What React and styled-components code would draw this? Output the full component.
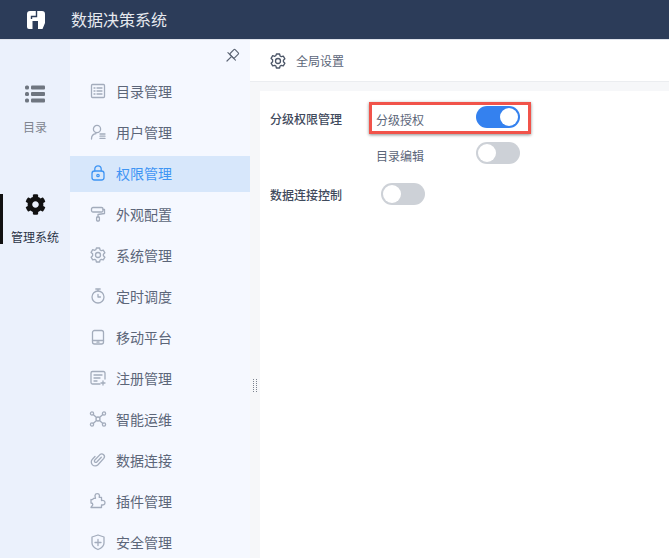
import React from "react";
import styled, { createGlobalStyle } from "styled-components";
import { FaCog } from "react-icons/fa";

const GlobalStyle = createGlobalStyle`
  html, body {
    margin: 0;
    padding: 0;
    height: 558px;
    overflow: hidden;
    background: #f6f7f9;
    font-family: "Noto Sans CJK SC", "Noto Sans", sans-serif;
  }
`;

const Page = styled.div`
  width: 669px;
  height: 558px;
  display: flex;
  flex-direction: column;
  overflow: hidden;
`;

const Header = styled.header`
  height: 39px;
  flex: none;
  background: #2c3c59;
  display: flex;
  align-items: center;
`;

const LogoBox = styled.div`
  width: 71px;
  display: flex;
  justify-content: center;
`;

const Title = styled.div`
  color: #e6e9ef;
  font-size: 16px;
  padding-bottom: 2px;
`;

const Body = styled.div`
  flex: 1;
  display: flex;
  min-height: 0;
  border-top: 1px solid #dfe3ec;
`;

const Rail = styled.nav`
  width: 70px;
  flex: none;
  background: #ebf1fc;
  padding-top: 44px;
  display: flex;
  flex-direction: column;
  gap: 59px;
  box-sizing: border-box;
`;

const RailItem = styled.div`
  display: flex;
  flex-direction: column;
  align-items: center;
  gap: 14px;
  font-size: 12px;
  line-height: 17px;
  position: relative;
  color: ${(p) => (p.$active ? "#2c3447" : "#80858f")};
  &::before {
    content: "";
    display: ${(p) => (p.$active ? "block" : "none")};
    position: absolute;
    left: 0;
    top: 0;
    width: 3px;
    height: 50px;
    background: #111;
  }
`;

const RailIcon = styled.div`
  height: 20px;
  display: flex;
  align-items: center;
  justify-content: center;
`;

const Menu = styled.aside`
  width: 180px;
  flex: none;
  background: #f5f8ff;
  padding-top: 34px;
  position: relative;
  box-sizing: border-box;
`;

const PinButton = styled.div`
  position: absolute;
  top: 5px;
  right: 10px;
  width: 16px;
  height: 16px;
  color: #5d6675;
`;

const MenuItem = styled.div`
  height: 36px;
  box-sizing: border-box;
  padding: 0 0 2px 19px;
  margin-bottom: 5px;
  display: flex;
  align-items: center;
  gap: 9px;
  font-size: 14px;
  color: ${(p) => (p.$active ? "#3f95f4" : "#5c6679")};
  background: ${(p) => (p.$active ? "#d7e7fb" : "transparent")};
  svg {
    color: ${(p) => (p.$active ? "#3f95f4" : "#a3acbc")};
    flex: none;
  }
`;

const Main = styled.main`
  flex: 1;
  display: flex;
  flex-direction: column;
  min-width: 0;
  position: relative;
`;

const GripMark = styled.svg`
  position: absolute;
  left: 3px;
  top: 339px;
`;

const TabBar = styled.div`
  height: 41px;
  flex: none;
  background: #fff;
  border-bottom: 1px solid #ebedf0;
  display: flex;
  align-items: center;
  padding-left: 19px;
  gap: 9px;
  font-size: 12px;
  color: #5c6679;
  svg {
    color: #4b5567;
  }
`;

const Panel = styled.section`
  flex: 1;
  margin: 9px 0 0 10px;
  background: #fff;
  padding: 15px 0 0 10px;
`;

const Group = styled.div`
  display: flex;
  align-items: flex-start;
  margin-bottom: 19px;
`;

const GroupLabel = styled.div`
  width: ${(p) => p.$width}px;
  flex: none;
  font-size: 12px;
  line-height: 22px;
  padding-top: ${(p) => p.$dip}px;
  font-weight: 500;
  color: #3f4a5c;
`;

const Options = styled.div`
  display: flex;
  flex-direction: column;
  gap: 14px;
`;

const Option = styled.div`
  width: 144px;
  height: 22px;
  display: flex;
  align-items: flex-start;
  justify-content: space-between;
  font-size: 12px;
  line-height: 22px;
  color: #5c6679;
  position: relative;
`;

const OptionText = styled.span`
  padding-top: 3px;
`;

const Highlight = styled.div`
  position: absolute;
  left: -7px;
  top: -4px;
  width: 162px;
  height: 32px;
  box-sizing: border-box;
  border: 3px solid #f1534a;
  box-shadow: 0 1px 3px rgba(0, 0, 0, 0.45);
`;

const Toggle = styled.div`
  width: 44px;
  height: 22px;
  border-radius: 11px;
  background: ${(p) => (p.$on ? "#3481ef" : "#cdd1d7")};
  position: relative;
  flex: none;
  &::after {
    content: "";
    position: absolute;
    top: 2px;
    left: ${(p) => (p.$on ? "24px" : "2px")};
    width: 18px;
    height: 18px;
    border-radius: 50%;
    background: #fff;
  }
`;

const Icon = ({ children, size = 18 }) => (
  <svg
    width={size}
    height={size}
    viewBox="0 0 18 18"
    fill="none"
    stroke="currentColor"
    strokeWidth="1.3"
    strokeLinecap="round"
    strokeLinejoin="round"
  >
    {children}
  </svg>
);

const GEAR =
  "M7.4 2h3.2l.5 2 1.2.7 2-.6 1.6 2.7-1.5 1.4v1.6l1.5 1.4-1.6 2.7-2-.6-1.2.7-.5 2H7.4l-.5-2-1.2-.7-2 .6-1.6-2.7 1.5-1.4V7.8L2.1 6.4 3.7 3.7l2 .6 1.2-.7z";

const menuItems = [
  {
    name: "目录管理",
    icon: (
      <>
        <rect x="2.5" y="2.5" width="13" height="13" rx="1" />
        <path d="M5 6h1M8 6h5M5 9h1M8 9h5M5 12h1M8 12h5" />
      </>
    ),
  },
  {
    name: "用户管理",
    icon: (
      <>
        <circle cx="8" cy="6" r="3.6" />
        <path d="M2.5 16c0-3 2-5 4.5-5.3M11 11h5M11 13.2h5M11 15.4h5" />
      </>
    ),
  },
  {
    name: "权限管理",
    active: true,
    icon: (
      <>
        <rect x="3" y="7" width="12" height="9" rx="2.5" />
        <path d="M5.8 7V5a3.2 3.2 0 0 1 6.4 0v2" />
        <circle cx="9" cy="11.5" r="1.2" />
      </>
    ),
  },
  {
    name: "外观配置",
    icon: (
      <>
        <rect x="2.5" y="2.5" width="11.5" height="4.5" rx="1.5" />
        <path d="M14 4.5h1.5v4L9 9.5v2.5" />
        <rect x="7.6" y="12" width="2.8" height="4" rx="0.8" />
      </>
    ),
  },
  {
    name: "系统管理",
    icon: (
      <>
        <path d={GEAR} />
        <circle cx="9" cy="9" r="2.5" />
      </>
    ),
  },
  {
    name: "定时调度",
    icon: (
      <>
        <circle cx="9" cy="10" r="6" />
        <path d="M6.8 2h4.4M9 2v2M9 7.5V10h2.5" />
      </>
    ),
  },
  {
    name: "移动平台",
    icon: (
      <>
        <rect x="3.5" y="2.5" width="11" height="13.5" rx="2" />
        <path d="M3.5 12.5h11M8 14.2h2" />
      </>
    ),
  },
  {
    name: "注册管理",
    icon: (
      <>
        <path d="M16 10V4a1.5 1.5 0 0 0-1.5-1.5h-11A1.5 1.5 0 0 0 2 4v9.5A1.5 1.5 0 0 0 3.5 15H11" />
        <path d="M5 6h8M5 9h6M5 12h3M14 12v4M12 14h4" />
      </>
    ),
  },
  {
    name: "智能运维",
    icon: (
      <>
        <circle cx="9" cy="9" r="2" />
        <circle cx="3" cy="3.5" r="1.6" />
        <circle cx="15" cy="3.5" r="1.6" />
        <circle cx="3" cy="14.5" r="1.6" />
        <circle cx="15" cy="14.5" r="1.6" />
        <path d="M4.2 4.6l3.3 3M13.8 4.6l-3.3 3M4.2 13.4l3.3-3M13.8 13.4l-3.3-3" />
      </>
    ),
  },
  {
    name: "数据连接",
    icon: (
      <path d="M12.3 6.2L7.8 11a1.4 1.4 0 0 1-2-2L11 3.6a2.7 2.7 0 0 1 3.8 3.8L9 13.8a3.9 3.9 0 0 1-5.6-5.5L6 5.5" />
    ),
  },
  {
    name: "插件管理",
    icon: (
      <path d="M6 3.5a2.3 2.3 0 0 1 4.5 0c0 .8-.3 1.2-.3 1.8h2.3v3.2c1.8-.4 3.5.4 3.5 2.2s-1.7 2.6-3.5 2.2v2.6H2c.3-1.5 1.8-1.5 1.8-3 0-1-1-1.5-1.8-1.5V7.5c1 .3 2.5-.2 2.5-1.200h2C6.3 5.500 6 4.500 6 3.500z" />
    ),
  },
  {
    name: "安全管理",
    icon: (
      <>
        <path d="M9 2l6 2v6c0 3-3 5.300-6 6.500C6 15.300 3 13 3 10V4z" />
        <path d="M9 6.500v6M6 9.500h6" />
      </>
    ),
  },
];

const Logo = () => (
  <svg width="18" height="18" viewBox="0 0 18 18">
    <path
      fill="#fff"
      d="M3 0H15Q18 0 18 3V12L15.5 18H11V10H5.5V18H2Q0 18 0 16V3Q0 0 3 0Z"
    />
    <path fill="none" stroke="#2c3c59" strokeWidth="1.4" d="M9.5 0V5.5H4.5V8" />
  </svg>
);

const ListIcon = () => (
  <svg width="20" height="18" viewBox="0 0 20 18" fill="#6f7680">
    <rect x="0" y="0.5" width="4" height="4" rx="1.5" />
    <rect x="0" y="7" width="4" height="4" rx="1.5" />
    <rect x="0" y="13.5" width="4" height="4" rx="1.5" />
    <rect x="6" y="0.5" width="14" height="4" rx="1" />
    <rect x="6" y="7" width="14" height="4" rx="1" />
    <rect x="6" y="13.5" width="14" height="4" rx="1" />
  </svg>
);

const Grip = () => (
  <GripMark width="4" height="13" viewBox="0 0 4 13" fill="#7b828e">
    {[0, 2, 4, 6, 8, 10, 12].map((y) => (
      <React.Fragment key={y}>
        <rect x="0" y={y} width="1" height="1" />
        <rect x="3" y={y} width="1" height="1" />
      </React.Fragment>
    ))}
  </GripMark>
);

export default function App() {
  return (
    <Page>
      <GlobalStyle />
      <Header>
        <LogoBox>
          <Logo />
        </LogoBox>
        <Title>数据决策系统</Title>
      </Header>
      <Body>
        <Rail>
          <RailItem>
            <RailIcon>
              <ListIcon />
            </RailIcon>
            目录
          </RailItem>
          <RailItem $active>
            <RailIcon>
              <FaCog size={21} color="#111" />
            </RailIcon>
            管理系统
          </RailItem>
        </Rail>
        <Menu>
          <PinButton>
            <Icon size={16}>
              <g transform="rotate(45 9 9)">
                <rect x="5.5" y="1.5" width="7" height="8" rx="1" />
                <path d="M3 9.5h12M9 9.5V17" />
              </g>
            </Icon>
          </PinButton>
          {menuItems.map((item) => (
            <MenuItem key={item.name} $active={item.active}>
              <Icon>{item.icon}</Icon>
              {item.name}
            </MenuItem>
          ))}
        </Menu>
        <Main>
          <Grip />
          <TabBar>
            <Icon>
              <path d={GEAR} />
              <circle cx="9" cy="9" r="2.5" />
            </Icon>
            全局设置
          </TabBar>
          <Panel>
            <Group>
              <GroupLabel $width={106} $dip={2}>
                分级权限管理
              </GroupLabel>
              <Options>
                <Option>
                  <Highlight />
                  <OptionText>分级授权</OptionText>
                  <Toggle $on />
                </Option>
                <Option>
                  <OptionText>目录编辑</OptionText>
                  <Toggle />
                </Option>
              </Options>
            </Group>
            <Group>
              <GroupLabel $width={111} $dip={1}>
                数据连接控制
              </GroupLabel>
              <Toggle />
            </Group>
          </Panel>
        </Main>
      </Body>
    </Page>
  );
}
